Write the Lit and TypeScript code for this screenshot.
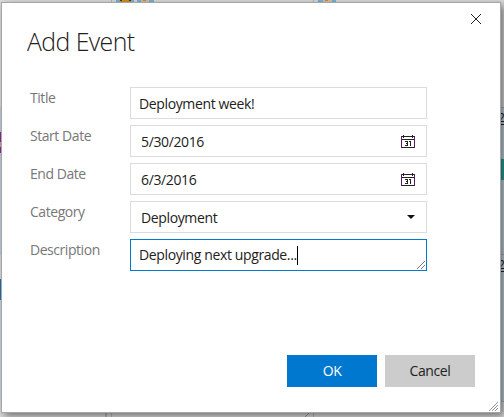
import { LitElement, html, css } from "lit";
import { customElement } from "lit/decorators.js";

@customElement("calendar-icon")
class CalendarIcon extends LitElement {
  static styles = css`
    :host { display: block; width: 14px; height: 13px; }
    svg { display: block; }
    .ink { fill: #222; }
    .side { fill: #5b1c68; }
  `;
  render() {
    return html`<svg width="14" height="13" viewBox="0 0 14 13" shape-rendering="crispEdges">
      <path class="ink" d="M0 1h14v1H0zM0 4h14v1H0zM0 12h14v1H0zM2 0h1v3H2zM11 0h1v3h-1z" />
      <path class="side" d="M0 1h1v12H0zM13 1h1v12h-1z" />
      <path class="ink" d="M4 6h3v5H4v-1h2V9H5V8h1V7H4zM8 6h2v5H9V7H8z" />
    </svg>`;
  }
}

@customElement("app-root")
class AppRoot extends LitElement {
  static styles = css`
    * { box-sizing: border-box; }
    :host {
      display: block; position: relative; width: 504px; height: 417px; overflow: hidden;
      background: #dcdcdc; font: 14px/20px "Open Sans", "Noto Sans", sans-serif; color: #212121;
      letter-spacing: -0.37px;
    }
    .backdrop { position: absolute; inset: 0; display: block; }
    .dialog {
      position: relative; display: flex; flex-direction: column;
      width: 500px; height: 411px; margin: 2px 0 0 1px; background: #fff;
      border: 1px solid #a6a6a6; box-shadow: 3px 3px 8px rgba(0, 0, 0, 0.5);
    }
    .top { display: flex; justify-content: space-between; height: 84px; padding: 10px 18px 0 25px; }
    h1 {
      margin: 10px 0 0; font-size: 26px; line-height: 36px; font-weight: 300; letter-spacing: -0.6px;
      white-space: nowrap; transform: scaleX(0.955); transform-origin: 0 0;
    }
    .close { display: block; width: 12px; height: 12px; }
    .form { display: grid; grid-template-columns: 100px 297px; grid-auto-rows: 32px; row-gap: 6px; padding-left: 28px; }
    .label { color: #777; line-height: 22px; letter-spacing: -0.45px; }
    .field {
      display: flex; align-items: center; justify-content: space-between;
      border: 1px solid #dcdcdc; padding: 1px 11px 0 10px; white-space: nowrap;
    }
    .text { padding-left: 8px; }
    .area { position: relative; border-color: #0078d0; padding-top: 0; }
    .value { display: flex; align-items: center; }
    .caret { width: 1px; height: 19px; background: #000; }
    .arrow { margin-bottom: 1px; }
    .grip { position: absolute; right: 1px; bottom: 1px; }
    .buttons { display: flex; gap: 8px; margin: auto 25px 25px auto; }
    .button { width: 90px; height: 32px; line-height: 31px; text-align: center; background: #ccc; }
    .primary { background: #0078d0; color: #fff; font-weight: 500; }
    .corner { position: absolute; right: 2px; bottom: 1px; }
  `;
  render() {
    return html`
      <svg class="backdrop" width="504" height="417">
        <path fill="#bcd0e2" d="M0 107h3v148H0z" />
        <path fill="#c9dae2" d="M0 300h3v101H0z" />
        <path fill="#c3d3dd" d="M499 107h5v294h-5z" />
        <path fill="#a9b4bc" d="M499 107h5v1h-5zM499 254h5v1h-5zM499 401h5v1h-5z" />
        <path fill="#8e2c96" d="M0 132h3v21H0z" /><path fill="#cf9a9b" d="M0 142h3v5H0z" />
        <path fill="#2773b5" d="M0 279h3v21H0z" />
        <path fill="#2fa39c" d="M499 159h5v21h-5z" />
        <path fill="#222" d="M499 124h5v1h-5zM499 271h5v1h-5z" />
        <text x="498" y="122" font-size="12" fill="#222">2</text>
        <text x="498" y="269" font-size="12" fill="#222">2</text>
        <path fill="#b8b8b8" d="M111 0h1v3h-1zM313 0h1v3h-1zM105 412h2v5h-2zM111 412h1v5h-1zM313 412h1v5h-1z" />
        <path d="M305 417l5-5" stroke="#999" />
        <path fill="#78b4d8" d="M116 0h18v3h-18zM137 0h17v3h-17zM318 0h18v3h-18z" />
        <path fill="#d29224" d="M120 0h11v2h-11z" /><path fill="#4b3a24" d="M120 0h2v1h-2zM129 0h2v1h-2z" />
        <path fill="#d9c69a" d="M141 0h8v3h-8zM323 0h9v3h-9z" />
        <path fill="#cf8078" d="M143 0h3v1h-3zM325 0h3v1h-3z" />
      </svg>
      <div class="dialog">
        <div class="top">
          <h1>Add Event</h1>
          <svg class="close" viewBox="0 0 12 12"><path d="M1 1L11 11M11 1L1 11" stroke="#222" fill="none" /></svg>
        </div>
        <div class="form">
          <div class="label">Title</div><div class="field text">Deployment week!</div>
          <div class="label">Start Date</div><div class="field">5/30/2016<calendar-icon></calendar-icon></div>
          <div class="label">End Date</div><div class="field">6/3/2016<calendar-icon></calendar-icon></div>
          <div class="label">Category</div>
          <div class="field">Deployment<svg class="arrow" width="8" height="4"><path d="M0 0h8L4 4z" fill="#111" /></svg></div>
          <div class="label">Description</div>
          <div class="field text area"><span class="value">Deploying next upgrade...<i class="caret"></i></span>
            <svg class="grip" width="8" height="8"><path d="M0 8L8 0M4 8L8 4" stroke="#555" stroke-width="0.8" /></svg></div>
        </div>
        <div class="buttons"><div class="button primary">OK</div><div class="button">Cancel</div></div>
        <svg class="corner" width="9" height="9"><path d="M0 9L9 0M3 9L9 3M6 9L9 6" stroke="#777" stroke-width="0.8" /></svg>
      </div>`;
  }
}
